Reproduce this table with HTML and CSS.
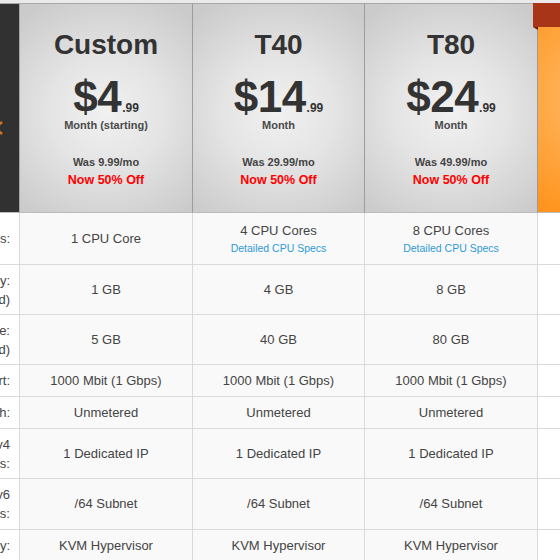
FILE: index.html
```html
<!DOCTYPE html>
<html>
<head>
<meta charset="utf-8">
<title>VPS Plans</title>
<link rel="stylesheet" href="styles.css">
</head>
<body>
<table class="plans">
  <colgroup>
    <col class="c-label">
    <col class="c-plan-a">
    <col class="c-plan-b">
    <col class="c-plan-a">
    <col class="c-feat">
  </colgroup>
  <thead>
    <tr class="head-row">
      <th class="corner"><svg class="corner-mark" width="10" height="18" viewBox="0 0 10 18"><path d="M9 3 L2 9 L9 15" fill="none" stroke="#e8731c" stroke-width="2.4"/></svg></th>
      <th class="plan">
        <div class="name">Custom</div>
        <div class="price">$4<span class="cents">.99</span></div>
        <div class="term">Month (starting)</div>
        <div class="was">Was 9.99/mo</div>
        <div class="now">Now 50% Off</div>
      </th>
      <th class="plan">
        <div class="name">T40</div>
        <div class="price">$14<span class="cents">.99</span></div>
        <div class="term">Month</div>
        <div class="was">Was 29.99/mo</div>
        <div class="now">Now 50% Off</div>
      </th>
      <th class="plan">
        <div class="name">T80</div>
        <div class="price">$24<span class="cents">.99</span></div>
        <div class="term">Month</div>
        <div class="was">Was 49.99/mo</div>
        <div class="now">Now 50% Off</div>
      </th>
      <th class="plan featured">
        <div class="ribbon"></div>
        <div class="name">T160</div>
        <div class="price">$44<span class="cents">.99</span></div>
        <div class="term">Month</div>
        <div class="was">Was 89.99/mo</div>
        <div class="now">Now 50% Off</div>
      </th>
    </tr>
  </thead>
  <tbody>
    <tr class="r-52">
      <th class="label">CPU Cores:</th>
      <td>1 CPU Core</td>
      <td>4 CPU Cores<a class="spec" href="#">Detailed CPU Specs</a></td>
      <td>8 CPU Cores<a class="spec" href="#">Detailed CPU Specs</a></td>
      <td class="feat">16 CPU Cores</td>
    </tr>
    <tr class="r-50">
      <th class="label">Memory:<br>(Guaranteed)</th>
      <td>1 GB</td>
      <td>4 GB</td>
      <td>8 GB</td>
      <td class="feat">16 GB</td>
    </tr>
    <tr class="r-50">
      <th class="label">SSD Storage:<br>(RAID Protected)</th>
      <td>5 GB</td>
      <td>40 GB</td>
      <td>80 GB</td>
      <td class="feat">160 GB</td>
    </tr>
    <tr class="r-32">
      <th class="label">Network Port:</th>
      <td>1000 Mbit (1 Gbps)</td>
      <td>1000 Mbit (1 Gbps)</td>
      <td>1000 Mbit (1 Gbps)</td>
      <td class="feat">1000 Mbit</td>
    </tr>
    <tr class="r-32">
      <th class="label">Bandwidth:</th>
      <td>Unmetered</td>
      <td>Unmetered</td>
      <td>Unmetered</td>
      <td class="feat">Unmetered</td>
    </tr>
    <tr class="r-50">
      <th class="label">IPv4<br>Addresses:</th>
      <td>1 Dedicated IP</td>
      <td>1 Dedicated IP</td>
      <td>1 Dedicated IP</td>
      <td class="feat">1 IP</td>
    </tr>
    <tr class="r-51">
      <th class="label">IPv6<br>Addresses:</th>
      <td>/64 Subnet</td>
      <td>/64 Subnet</td>
      <td>/64 Subnet</td>
      <td class="feat">/64 Subnet</td>
    </tr>
    <tr class="r-32">
      <th class="label">Virtualization Technology:</th>
      <td>KVM Hypervisor</td>
      <td>KVM Hypervisor</td>
      <td>KVM Hypervisor</td>
      <td class="feat">KVM</td>
    </tr>
  </tbody>
</table>
</body>
</html>
```
FILE: styles.css
```css
html, body {
  margin: 0;
  padding: 0;
  overflow: hidden;
}
body {
  width: 560px;
  height: 560px;
  padding-top: 3px;
  box-sizing: border-box;
  background: #eaeaea;
  font-family: "Liberation Sans", Arial, sans-serif;
}
.plans {
  border-collapse: separate;
  border-spacing: 0;
  table-layout: fixed;
  width: 881px;
  margin-left: -161px;
}
.c-label { width: 181px; }
.c-plan-a { width: 173px; }
.c-plan-b { width: 172px; }
.c-feat { width: 182px; }

.plans th, .plans td {
  box-sizing: border-box;
  padding: 0;
}

/* header */
.head-row th {
  height: 210px;
  vertical-align: top;
  border-top: 1px solid #a8a8a8;
  border-bottom: 1px solid #bcbcbc;
  border-right: 1px solid #9c9c9c;
}
.corner {
  background: #313131;
  text-align: right;
  padding: 115px 16px 0 0 !important;
  border-right-color: #a6a6a6 !important;
}
.corner-mark { display: inline-block; vertical-align: top; }
.plan {
  position: relative;
  padding-top: 25px !important;
  text-align: center;
  color: #333;
  background: radial-gradient(ellipse 75% 60% at 50% 52%, #f1f1f1 0%, #e4e4e4 45%, #cbcbcb 100%);
}
.name {
  font-size: 28px;
  line-height: 32px;
  font-weight: bold;
}
.price {
  margin-top: 14px;
  font-size: 44px;
  line-height: 43px;
  height: 43px;
  font-weight: bold;
  letter-spacing: -0.5px;
}
.cents {
  font-size: 12px;
  line-height: 0;
  letter-spacing: 0;
  margin-left: 1px;
}
.term {
  font-size: 11px;
  line-height: 14px;
  font-weight: bold;
  color: #4a4a4a;
}
.was {
  margin-top: 23px;
  font-size: 11px;
  line-height: 14px;
  font-weight: bold;
  color: #444;
}
.now {
  margin-top: 3px;
  font-size: 12.5px;
  line-height: 16px;
  font-weight: bold;
  color: #ff0000;
}
.featured {
  border-right: none !important;
  padding-top: 48px !important;
  color: #fff;
  background: radial-gradient(ellipse 80% 60% at 45% 45%, #ffc27e 0%, #ffab4a 50%, #ff9520 100%);
}
.featured .was, .featured .term { color: #fff; }
.featured .now { color: #fff; }
.ribbon {
  position: absolute;
  top: -1px;
  left: -5px;
  width: calc(100% + 10px);
  height: 24px;
  background: #a93519;
}
.ribbon::after {
  content: "";
  position: absolute;
  left: 0;
  top: 100%;
  border-top: 3px solid #6a1e0c;
  border-left: 5px solid transparent;
}

/* body */
tbody th, tbody td {
  border-right: 1px solid #dadada;
  border-bottom: 1px solid #dadada;
  vertical-align: middle;
  font-size: 13px;
  color: #444;
}
tbody td {
  background: #f9f9f9;
  text-align: center;
  line-height: 16px;
}
tbody .label {
  background: #fff;
  text-align: right;
  font-weight: normal;
  padding-right: 9px;
  line-height: 19px;
  color: #444;
}
tbody td.feat {
  background: #fff;
  border-right: none;
}
.spec {
  display: block;
  margin-top: 3px;
  font-size: 10.5px;
  line-height: 13px;
  color: #2f9ad8;
  text-decoration: none;
}
.r-52 th, .r-52 td { height: 52px; }
.r-50 th, .r-50 td { height: 50px; }
.r-51 th, .r-51 td { height: 51px; }
.r-32 th, .r-32 td { height: 32px; }
```
